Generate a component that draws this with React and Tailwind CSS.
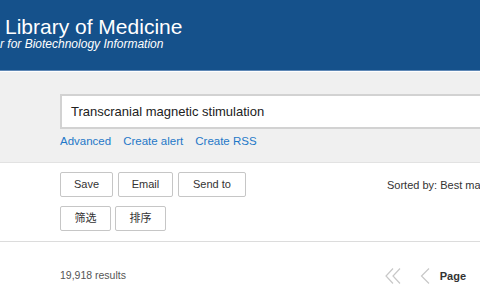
import React from 'react';

const font = { fontFamily: '"Liberation Sans", Arial, "Noto Sans CJK SC", sans-serif' };

const Btn = ({ children, w }) => (
  <button className={`h-[25px] ${w} border border-[#c6c6c6] rounded-[2px] bg-white text-[11px] text-[#333] flex items-center justify-center`}>
    {children}
  </button>
);

const App = () => {
  return (
    <div className="w-[480px] h-[300px] overflow-hidden bg-white" style={font}>
      {/* NCBI header */}
      <div className="h-[70px] bg-[#15518b] text-white pt-[16px]">
        <div className="pl-[5px] text-[21px] leading-[21px]">Library of Medicine</div>
        <div className="text-[12px] leading-[14px] italic">r for Biotechnology Information</div>
      </div>
      <div className="h-px bg-[#5f88b6]" />
      <div className="h-px bg-white" />

      {/* search band */}
      <div className="h-[91px] bg-[#f0f0f0] border-b border-[#e2e2e2] pt-[22px] pl-[60px]">
        <div className="h-[35px] w-[440px] bg-white border-2 border-[#d2d2d2] flex items-center pl-[9px] text-[13px] text-[#212121]">
          Transcranial magnetic stimulation
        </div>
        <div className="flex gap-[12px] mt-[5px] text-[11.5px] text-[#1f78c8] leading-[14px]">
          <span>Advanced</span>
          <span>Create alert</span>
          <span>Create RSS</span>
        </div>
      </div>

      {/* actions */}
      <div className="h-[79px] border-b border-[#dcdcdc] pt-[9px] pl-[60px] flex">
        <div className="flex flex-col gap-[9px]">
          <div className="flex gap-[5px]">
            <Btn w="w-[53px]">Save</Btn>
            <Btn w="w-[55px]">Email</Btn>
            <Btn w="w-[68px]">Send to</Btn>
          </div>
          <div className="flex gap-[4px]">
            <Btn w="w-[51px]">筛选</Btn>
            <Btn w="w-[51px]">排序</Btn>
          </div>
        </div>
        <div className="ml-[141px] mt-[6px] text-[11px] text-[#333] whitespace-nowrap leading-[14px]">
          Sorted by: Best match
        </div>
      </div>

      {/* results bar */}
      <div className="flex items-center h-[57px] pt-[11px] pl-[60px]">
        <span className="text-[10.5px] text-[#555]">19,918 results</span>
        <div className="ml-auto flex items-center mr-[14px]">
          <svg width="16" height="16" viewBox="0 0 16 16" fill="none" stroke="#c8c8c8" strokeWidth="1.2">
            <path d="M8 0.5 L1 8 L8 15.5" />
            <path d="M15 0.5 L8 8 L15 15.5" />
          </svg>
          <svg className="ml-[19px]" width="10" height="16" viewBox="0 0 10 16" fill="none" stroke="#c8c8c8" strokeWidth="1.2">
            <path d="M9 0.5 L1.5 8 L9 15.5" />
          </svg>
          <span className="ml-[10px] text-[11px] font-bold text-[#333]">Page</span>
        </div>
      </div>
    </div>
  );
};

export default App;
